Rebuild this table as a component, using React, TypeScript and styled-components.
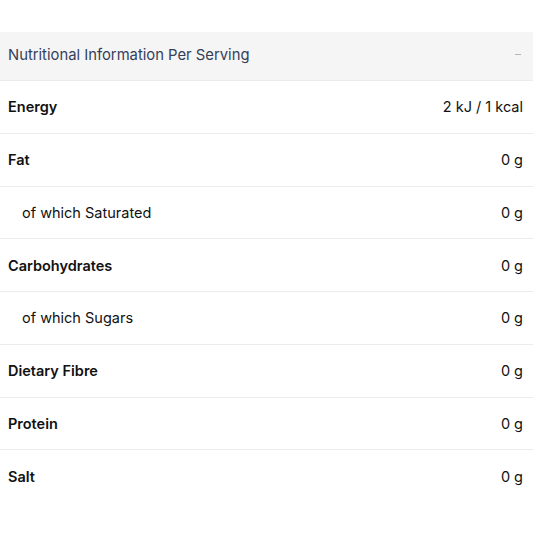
import React from "react";
import styled, { createGlobalStyle } from "styled-components";

const GlobalStyle = createGlobalStyle`
  body {
    margin: 0;
    background: #ffffff;
    font-family: Inter, "Noto Sans", sans-serif;
  }
`;

const Wrapper = styled.div`
  padding-top: 32px;
`;

const Header = styled.div`
  display: flex;
  align-items: center;
  justify-content: space-between;
  height: 49px;
  padding: 0 12px 3px 8px;
  box-sizing: border-box;
  background: #f5f5f5;
  border-bottom: 1px solid #ebebeb;
`;

const Title = styled.span`
  font-size: 14.8px;
  color: #34405a;
`;

const Toggle = styled.span`
  width: 6px;
  height: 1px;
  background: #b5b5b5;
`;

const Row = styled.div<{ $last?: boolean }>`
  display: flex;
  align-items: center;
  justify-content: space-between;
  height: 51.75px;
  padding: 0 10px 0 8px;
  border-bottom: ${(p) => (p.$last ? "none" : "1px solid #ececec")};
`;

const Label = styled.span<{ $sub?: boolean }>`
  font-size: 14.5px;
  color: #111111;
  font-weight: ${(p) => (p.$sub ? 400 : 600)};
  padding-left: ${(p) => (p.$sub ? "14px" : "0")};
`;

const Value = styled.span`
  font-size: 14.5px;
  color: #111111;
`;

type Item = { label: string; value: string; sub?: boolean };

const items: Item[] = [
  { label: "Energy", value: "2 kJ / 1 kcal" },
  { label: "Fat", value: "0 g" },
  { label: "of which Saturated", value: "0 g", sub: true },
  { label: "Carbohydrates", value: "0 g" },
  { label: "of which Sugars", value: "0 g", sub: true },
  { label: "Dietary Fibre", value: "0 g" },
  { label: "Protein", value: "0 g" },
  { label: "Salt", value: "0 g" },
];

const App = () => {
  return (
    <>
      <GlobalStyle />
      <Wrapper>
        <Header>
          <Title>Nutritional Information Per Serving</Title>
          <Toggle />
        </Header>
        {items.map((it, i) => (
          <Row key={it.label} $last={i === items.length - 1}>
            <Label $sub={it.sub}>{it.label}</Label>
            <Value>{it.value}</Value>
          </Row>
        ))}
      </Wrapper>
    </>
  );
};

export default App;
